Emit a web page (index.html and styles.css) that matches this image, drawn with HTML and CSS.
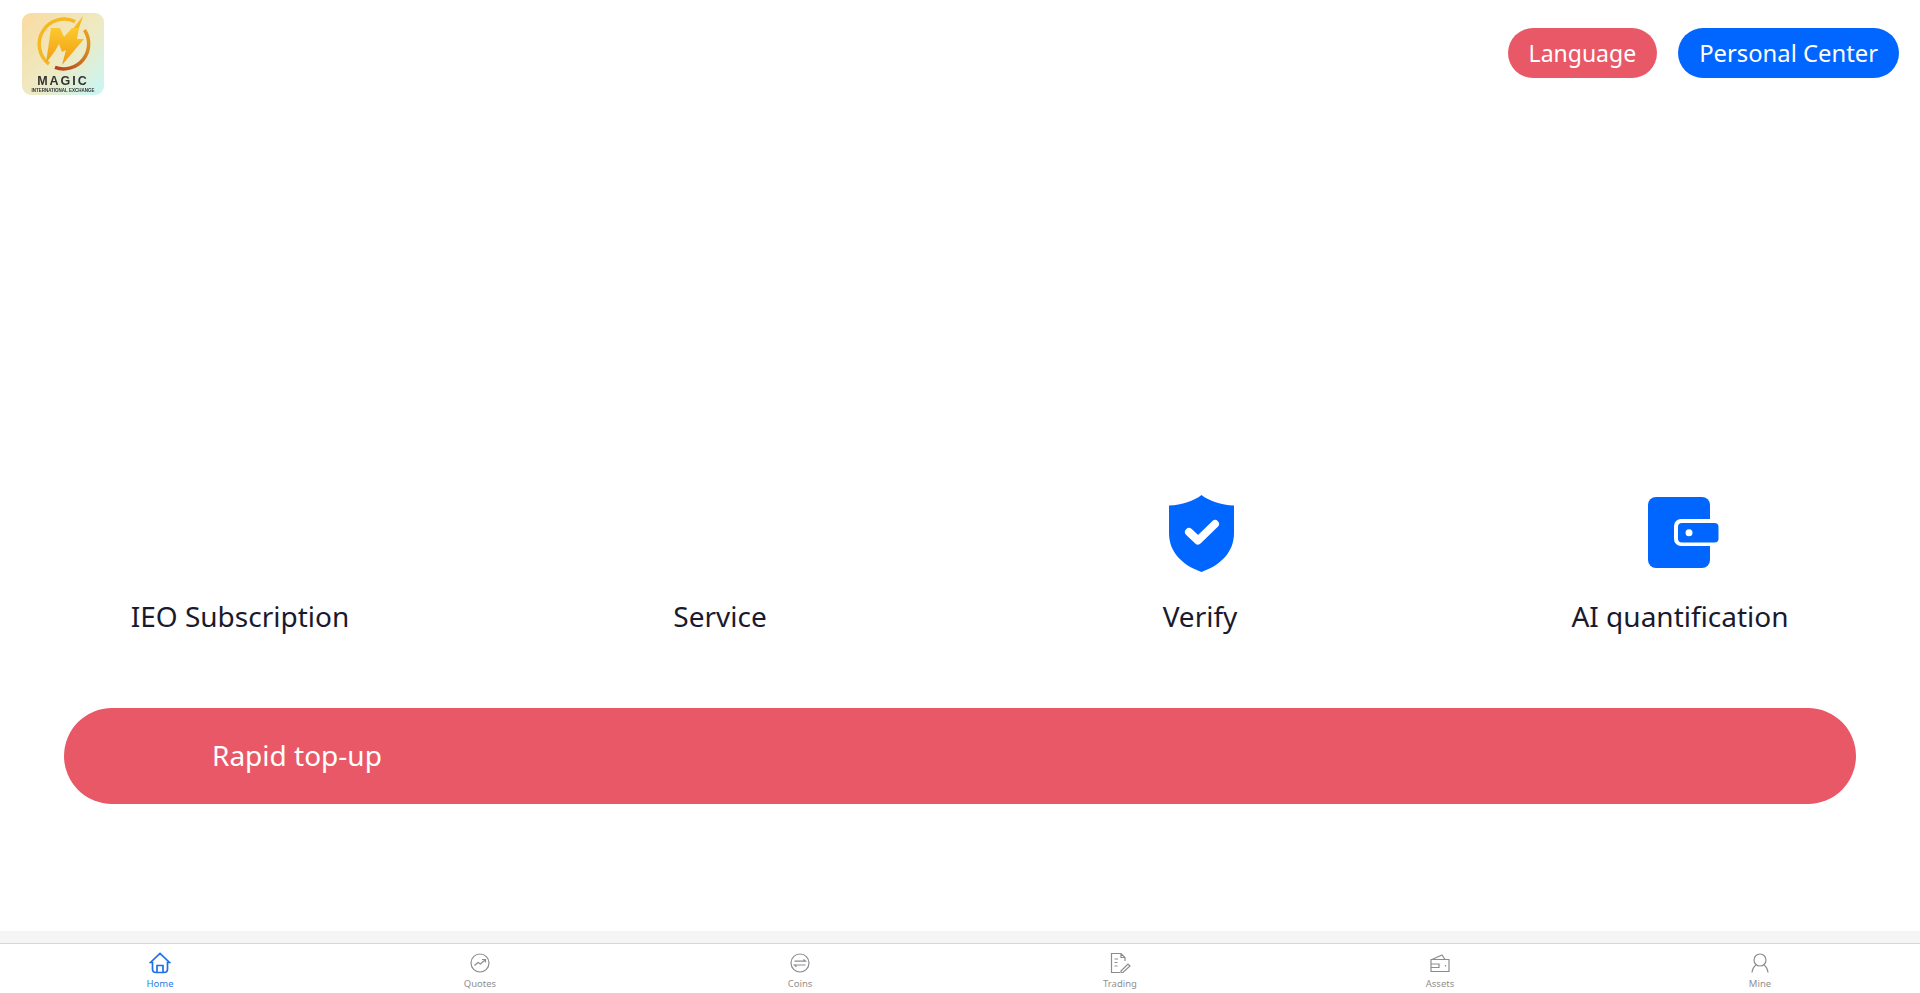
FILE: index.html
```html
<!DOCTYPE html>
<html lang="en">
<head>
    <meta charset="UTF-8">
    <meta name="viewport" content="width=device-width, initial-scale=1.0">
    <title>Magic</title>
    <link rel="stylesheet" href="styles.css">
</head>
<body>

    <main class="page">
        <header class="top-bar">
            <svg class="logo" viewBox="0 0 82 82">
                <defs>
                    <linearGradient id="logo-bg" x1="0" y1="0" x2="1" y2="1">
                        <stop offset="0" stop-color="#f9dba0"/>
                        <stop offset="0.55" stop-color="#eeeac4"/>
                        <stop offset="1" stop-color="#c6f7f8"/>
                    </linearGradient>
                    <linearGradient id="logo-m" x1="0" y1="0" x2="0" y2="1">
                        <stop offset="0" stop-color="#fcc92e"/>
                        <stop offset="1" stop-color="#f09a12"/>
                    </linearGradient>
                    <linearGradient id="logo-ring" x1="1" y1="0" x2="0" y2="1">
                        <stop offset="0" stop-color="#e8a524"/>
                        <stop offset="1" stop-color="#b3401f"/>
                    </linearGradient>
                </defs>
                <rect width="82" height="82" rx="9" fill="url(#logo-bg)"/>
                <path d="M27 51 A25 25 0 0 1 53 8.600" fill="none" stroke="#f5b820" stroke-width="3.500"/>
                <path d="M62.500 17 A25 25 0 0 1 33 54.300" fill="none" stroke="url(#logo-ring)" stroke-width="3.500"/>
                <path d="M50 17 L61 3 L57 15 Z" fill="#f5b820"/>
                <path d="M24 50 L29 15 L38 15 L42 24 L50 15 L57 15 L55 26 L62 26 L40 52 L44 37 L40 39 L37 31 L33 38 Z" fill="url(#logo-m)"/>
                <text class="logo-name" x="41" y="72" text-anchor="middle">MAGIC</text>
                <text class="logo-sub" x="41" y="79" text-anchor="middle">INTERNATIONAL EXCHANGE</text>
            </svg>
            <div class="top-actions">
                <button class="pill pill-red">Language</button>
                <button class="pill pill-blue">Personal Center</button>
            </div>
        </header>

        <section class="features">
            <div class="feature">
                <div class="feature-icon"></div>
                <span>IEO Subscription</span>
            </div>
            <div class="feature">
                <div class="feature-icon"></div>
                <span>Service</span>
            </div>
            <div class="feature">
                <div class="feature-icon">
                    <svg class="shield" viewBox="0 0 65 77">
                        <path d="M32.500 0 C25 6 13 10 0 10.500 V38 C0 57 13 70 32.500 77 C52 70 65 57 65 38 V10.500 C52 10 40 6 32.500 0 Z" fill="#0066ff"/>
                        <path d="M20 37 L29 45.500 L46 29" fill="none" stroke="#fff" stroke-width="8" stroke-linecap="round" stroke-linejoin="round"/>
                    </svg>
                </div>
                <span>Verify</span>
            </div>
            <div class="feature">
                <div class="feature-icon">
                    <svg class="wallet" viewBox="0 0 71 71">
                        <rect width="62" height="71" rx="8" fill="#0066ff"/>
                        <rect x="26" y="22" width="45" height="27" rx="7" fill="#fff"/>
                        <rect x="30" y="26" width="40.500" height="19.500" rx="4" fill="#0066ff"/>
                        <circle cx="41" cy="35.700" r="3.500" fill="#fff"/>
                    </svg>
                </div>
                <span>AI quantification</span>
            </div>
        </section>

        <button class="top-up">Rapid top-up</button>
    </main>

    <div class="band"></div>

    <nav class="tabs">
        <a class="tab active">
            <svg viewBox="0 0 22 22"><path d="M3.500 10.500 L1.500 10.500 L11 1.500 L20.500 10.500 L18.500 10.500 V17 Q18.500 20.500 15 20.500 H7 Q3.500 20.500 3.500 17 Z M8 20.500 V13.500 H14 V20.500"/></svg>
            <span>Home</span>
        </a>
        <a class="tab">
            <svg viewBox="0 0 22 22"><circle cx="11" cy="11" r="9"/><path d="M5.500 13.500 L9 10.500 L11.500 12 L16 8 M13 7.500 H16.500 V10.500"/></svg>
            <span>Quotes</span>
        </a>
        <a class="tab">
            <svg viewBox="0 0 22 22"><circle cx="11" cy="11" r="9"/><path d="M5.500 9.200 H16.500 L14.500 7.500 M16.500 13 H5.500 L7.500 14.700"/></svg>
            <span>Coins</span>
        </a>
        <a class="tab">
            <svg viewBox="0 0 22 22"><path d="M11 20.500 H2.500 V1.500 H12 L16 5.500 V9 M12 1.500 V5.500 H16 M5.500 7 H9 M5.500 10.500 H8.500 M5.500 14 H8.500 M12 19 L19 12 L21 14 L14 20.500 H12 Z"/></svg>
            <span>Trading</span>
        </a>
        <a class="tab">
            <svg viewBox="0 0 22 22"><path d="M3 7.500 L13 3 L16 7.500 M2 7.500 H20 V19.500 H2 Z M2 12 H10 V15.500 H2 M16.500 13 V14.500"/></svg>
            <span>Assets</span>
        </a>
        <a class="tab">
            <svg viewBox="0 0 22 22"><circle cx="11" cy="8" r="6"/><path d="M3 20.500 C3.500 16.500 5 14.500 7 13 M19 20.500 C18.500 16.500 17 14.500 15 13"/></svg>
            <span>Mine</span>
        </a>
    </nav>

</body>
</html>
```
FILE: styles.css
```css
/* Basic page styling */
html, body {
    height: 100%;
}

body {
    display: flex;
    flex-direction: column;
    margin: 0;
    font-family: "Noto Sans", Arial, sans-serif;
    background-color: #fff;
    color: #1a1a2e;
    overflow: hidden;
}

.page {
    flex: 1;
    display: flex;
    flex-direction: column;
    min-height: 0;
}

/* Top bar */
.top-bar {
    display: flex;
    justify-content: space-between;
    padding: 13px 21px 0 22px;
}

.logo {
    width: 82px;
    height: 82px;
    filter: blur(0.4px);
}

.logo-name {
    font-family: "Liberation Sans", Arial, sans-serif;
    font-size: 12.500px;
    font-weight: bold;
    letter-spacing: 2px;
    fill: #333;
}

.logo-sub {
    font-family: "Liberation Sans", Arial, sans-serif;
    font-size: 4.500px;
    font-weight: bold;
    fill: #333;
}

.top-actions {
    display: flex;
    gap: 21px;
    margin-top: 15px;
}

.pill {
    height: 50px;
    padding: 0 21px;
    border: none;
    border-radius: 25px;
    font-family: inherit;
    font-size: 23.800px;
    color: #fff;
}

.pill-red {
    background-color: #e95867;
    font-size: 23px;
}

.pill-blue {
    background-color: #0066ff;
}

/* Feature row */
.features {
    display: grid;
    grid-template-columns: repeat(4, 1fr);
    margin-top: 398px;
}

.feature {
    display: flex;
    flex-direction: column;
    align-items: center;
    font-size: 28px;
}

.feature-icon {
    display: flex;
    justify-content: center;
    align-items: center;
    height: 80px;
    margin-bottom: 24px;
}

.shield {
    width: 65px;
    height: 77px;
    margin-left: 3px;
}

.wallet {
    width: 71px;
    height: 71px;
    margin: 0 0 2px 6px;
}

/* Top-up bar */
.top-up {
    height: 96px;
    margin: 73px 64px 0;
    padding: 0 0 2px 148px;
    border: none;
    border-radius: 48px;
    background-color: #e95867;
    color: #fff;
    font-family: inherit;
    font-size: 28px;
    text-align: left;
}

/* Bottom navigation */
.band {
    height: 12px;
    background-color: #f5f5f5;
}

.tabs {
    display: grid;
    grid-template-columns: repeat(6, 1fr);
    height: 49px;
    border-top: 1px solid #d8d8d8;
}

.tab {
    display: flex;
    flex-direction: column;
    align-items: center;
    padding-top: 8px;
    font-size: 9.500px;
    line-height: 14px;
    color: #909090;
}

.tab svg {
    width: 22px;
    height: 22px;
    margin-bottom: 3px;
    fill: none;
    stroke: #8a8d91;
    stroke-width: 1.200;
}

.tab.active {
    color: #2a7be8;
}

.tab.active svg {
    stroke: #1f72e6;
    stroke-width: 1.700;
}
```
